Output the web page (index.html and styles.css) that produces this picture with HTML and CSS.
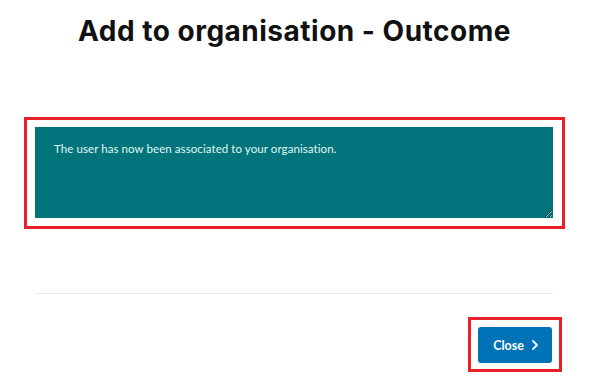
FILE: index.html
```html
<!DOCTYPE html>
<html lang="en">
<head>
<meta charset="utf-8">
<title>Add to organisation - Outcome</title>
<link rel="stylesheet" href="styles.css">
</head>
<body>
<main class="page">
  <h1 class="title">Add to organisation - Outcome</h1>
  <div class="frame frame-outcome">
    <div class="outcome">The user has now been associated to your organisation.</div>
  </div>
  <hr class="divider">
  <div class="actions">
    <div class="frame frame-button">
      <button class="btn-close" type="button">
        <span>Close</span>
        <svg class="chevron" width="6" height="10" viewBox="0 0 6 10" aria-hidden="true"><path d="M1 1l4 4-4 4" fill="none" stroke="#fff" stroke-width="1.8" stroke-linecap="round" stroke-linejoin="round"/></svg>
      </button>
    </div>
  </div>
</main>
</body>
</html>
```

FILE: styles.css
```css
html, body {
  margin: 0;
  padding: 0;
  background: #ffffff;
}

body {
  font-family: Lato, "Noto Sans", sans-serif;
  color: #111111;
}

.page {
  padding: 14px 24px 0;
}

.title {
  margin: 0;
  text-align: center;
  font-family: Inter, Lato, sans-serif;
  font-size: 28px;
  line-height: 34px;
  font-weight: 700;
  letter-spacing: 0.5px;
  color: #111111;
}

.frame {
  border: 3px solid #e8202a;
}

.frame-outcome {
  margin-top: 69px;
  padding: 7px 9px 8px 8px;
}

.outcome {
  height: 91px;
  box-sizing: border-box;
  padding: 14px 19px;
  background: #00747a;
  color: #e4f6f6;
  font-size: 11.5px;
  letter-spacing: 0.08px;
  line-height: 16px;
  resize: both;
  overflow: hidden;
}

.divider {
  margin: 64px 12px 0 11px;
  border: 0;
  height: 1px;
  background: #ececec;
}

.actions {
  display: flex;
  justify-content: flex-end;
  margin-top: 23px;
  padding-right: 3px;
}

.frame-button {
  display: flex;
  padding: 7px 7px 6px 7px;
}

.btn-close {
  display: flex;
  align-items: center;
  justify-content: center;
  gap: 8px;
  width: 74px;
  height: 36px;
  padding: 0 0 0 1px;
  border: 0;
  border-radius: 3px;
  background: #0072b8;
  color: #ffffff;
  font-family: Lato, "Noto Sans", sans-serif;
  font-size: 12.5px;
  font-weight: 700;
}

.chevron {
  display: block;
}
```
